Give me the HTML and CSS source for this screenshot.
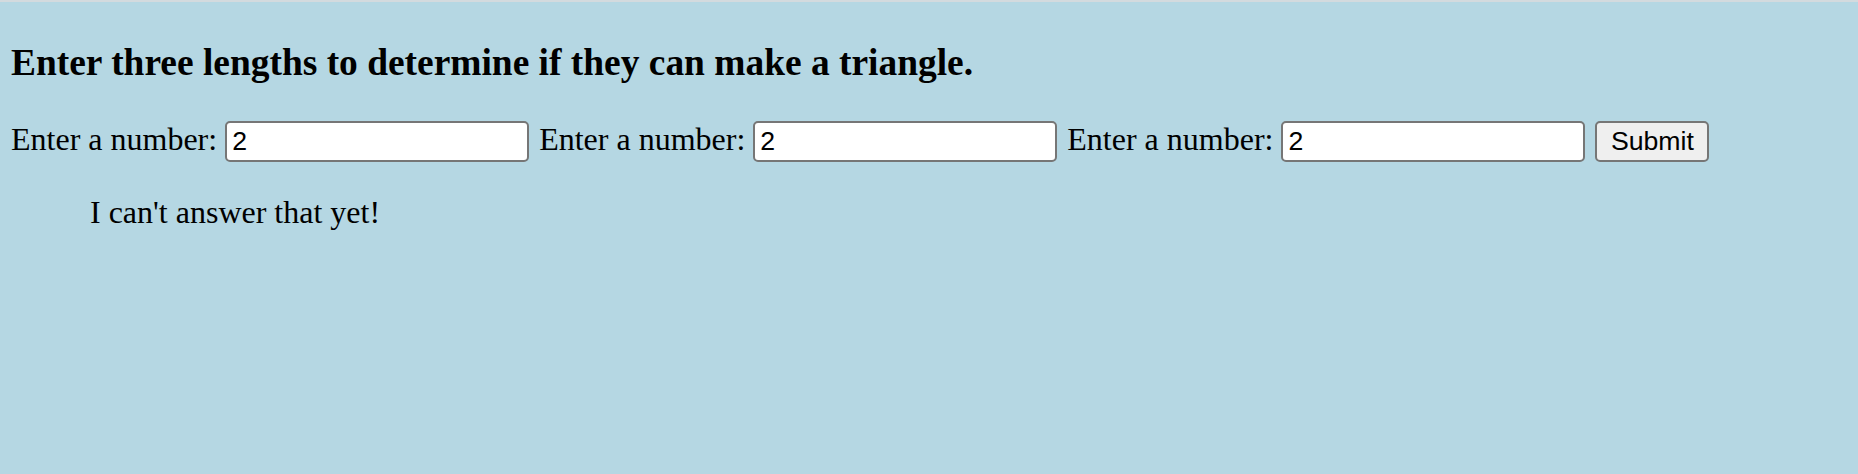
FILE: index.html
```html
<!DOCTYPE html>
<html lang="en">
<head>
<meta charset="utf-8">
<title>Triangle</title>
<link rel="stylesheet" href="styles.css">
</head>
<body>
<h3 class="title">Enter three lengths to determine if they can make a triangle.</h3>
<form class="row">Enter a number: <input class="num" type="text" value="2"> Enter a number: <input class="num" type="text" value="2"> Enter a number: <input class="num" type="text" value="2"> <button class="submit" type="button">Submit</button></form>
<p class="answer">I can't answer that yet!</p>
</body>
</html>
```
FILE: styles.css
```css
html {
  background: #b5d7e3;
}
body {
  margin: 0;
  padding: 0 0 0 11px;
  border-top: 2px solid #d3dade;
  background: #b5d7e3;
  color: #000;
  font-family: "Liberation Serif", "Times New Roman", serif;
  font-size: 32px;
  min-height: 472px;
}
.title {
  margin: 38.6px 0 0;
  font-size: 37.44px;
  font-weight: bold;
  line-height: normal;
  white-space: nowrap;
}
.row {
  margin: 37.4px 0 0;
  white-space: nowrap;
}
.num {
  box-sizing: border-box;
  width: 304px;
  height: 41px;
  margin: 0 2px 0 0;
  padding: 0 5px;
  border: 2px solid #767676;
  border-radius: 5px;
  background: #fff;
  color: #000;
  font-family: "Liberation Sans", Arial, sans-serif;
  font-size: 26.67px;
  vertical-align: baseline;
}
.submit {
  box-sizing: border-box;
  width: 114px;
  height: 41px;
  margin: 0;
  padding: 0;
  border: 2px solid #767676;
  border-radius: 5px;
  background: #efefef;
  color: #000;
  font-family: "Liberation Sans", Arial, sans-serif;
  font-size: 26.67px;
  vertical-align: baseline;
}
.answer {
  margin: 32px 0 0 79px;
}
```
